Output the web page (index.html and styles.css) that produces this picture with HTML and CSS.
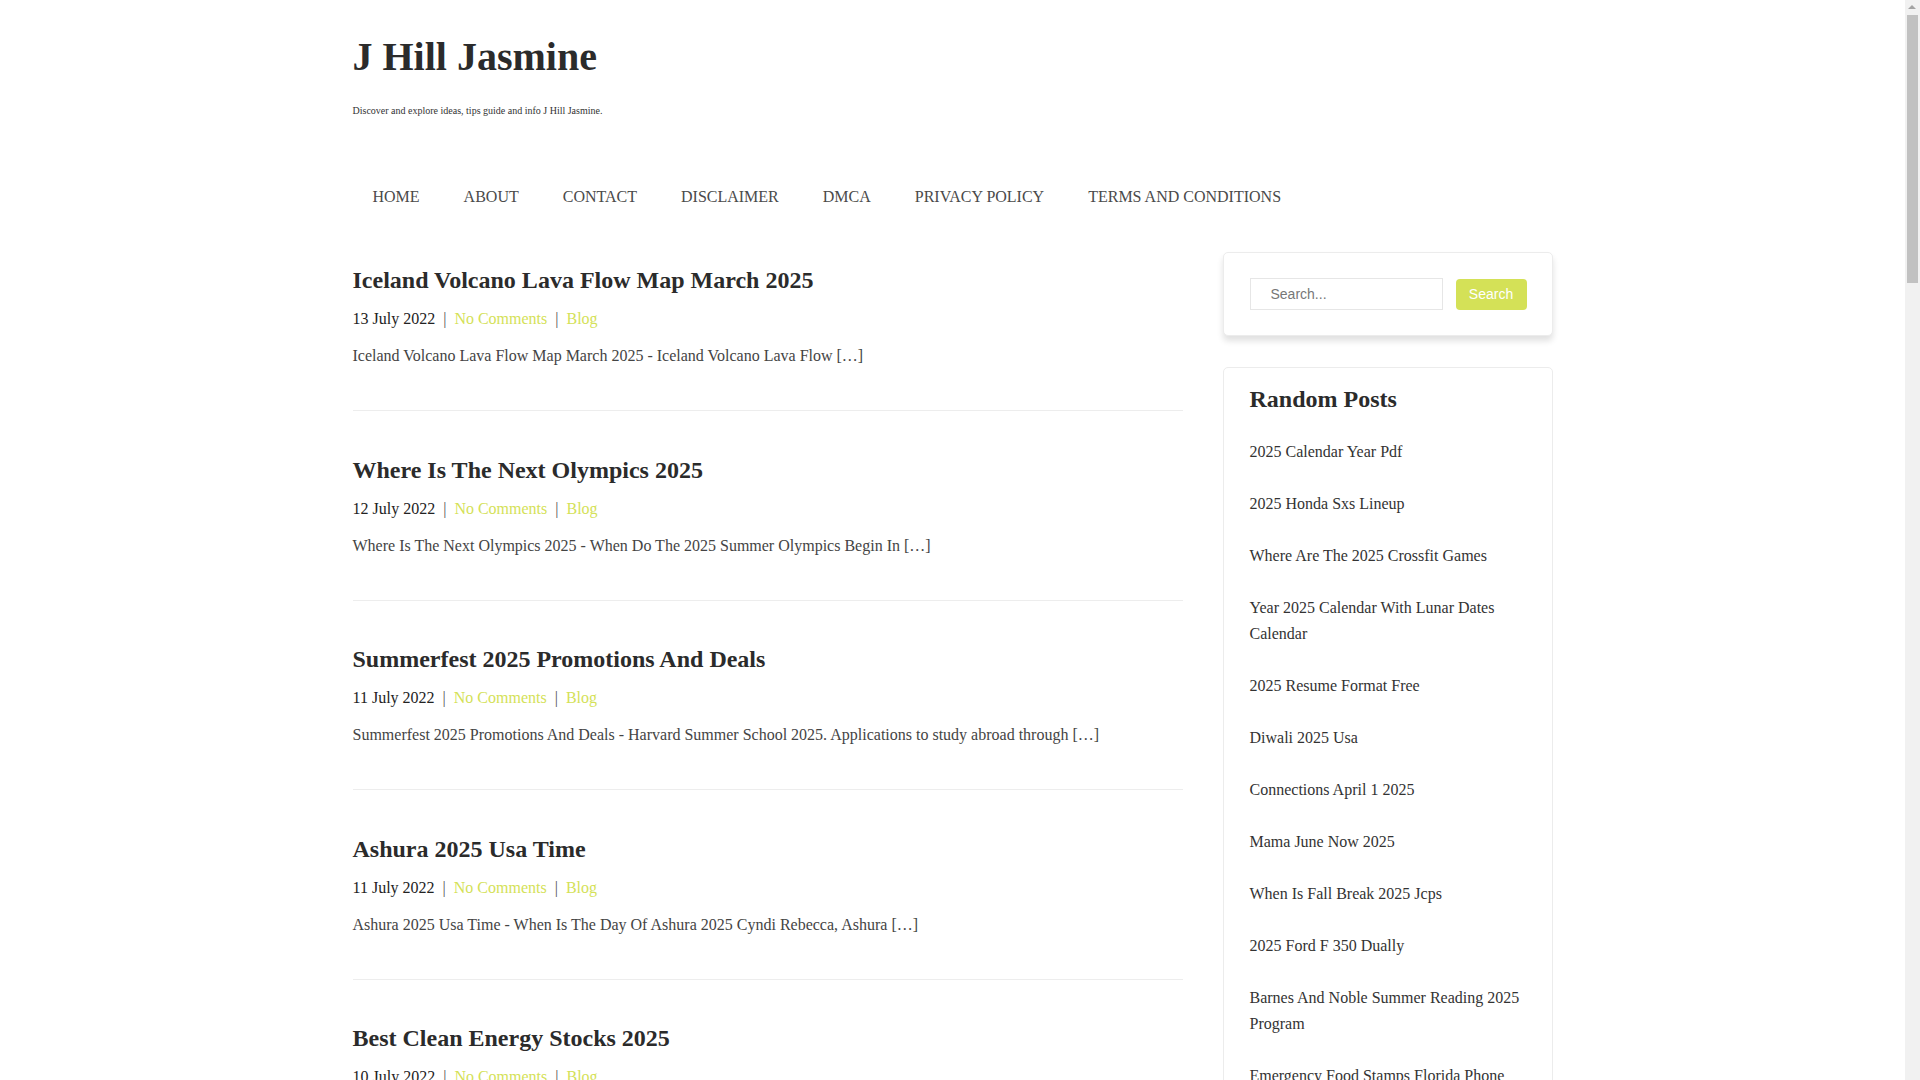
FILE: index.html
```html
<!DOCTYPE html>
<html lang="en">
<head>
<meta charset="utf-8">
<title>J Hill Jasmine</title>
<link rel="stylesheet" href="styles.css">
</head>
<body>
<div class="wrap">
  <header class="site-header">
    <h1 class="site-title">J Hill Jasmine</h1>
    <p class="tagline">Discover and explore ideas, tips guide and info J Hill Jasmine.</p>
    <nav class="menu">
      <a href="#">HOME</a>
      <a href="#">ABOUT</a>
      <a href="#">CONTACT</a>
      <a href="#">DISCLAIMER</a>
      <a href="#">DMCA</a>
      <a href="#">PRIVACY POLICY</a>
      <a href="#">TERMS AND CONDITIONS</a>
    </nav>
  </header>
  <div class="layout">
    <main class="posts">
      <article class="post">
        <h2 class="post-title">Iceland Volcano Lava Flow Map March 2025</h2>
        <div class="meta"><span>13 July 2022</span><span class="sep">|</span><a href="#">No Comments</a><span class="sep">|</span><a href="#">Blog</a></div>
        <p class="excerpt">Iceland Volcano Lava Flow Map March 2025 - Iceland Volcano Lava Flow […]</p>
      </article>
      <article class="post">
        <h2 class="post-title">Where Is The Next Olympics 2025</h2>
        <div class="meta"><span>12 July 2022</span><span class="sep">|</span><a href="#">No Comments</a><span class="sep">|</span><a href="#">Blog</a></div>
        <p class="excerpt">Where Is The Next Olympics 2025 - When Do The 2025 Summer Olympics Begin In […]</p>
      </article>
      <article class="post">
        <h2 class="post-title">Summerfest 2025 Promotions And Deals</h2>
        <div class="meta"><span>11 July 2022</span><span class="sep">|</span><a href="#">No Comments</a><span class="sep">|</span><a href="#">Blog</a></div>
        <p class="excerpt">Summerfest 2025 Promotions And Deals - Harvard Summer School 2025. Applications to study abroad through […]</p>
      </article>
      <article class="post">
        <h2 class="post-title">Ashura 2025 Usa Time</h2>
        <div class="meta"><span>11 July 2022</span><span class="sep">|</span><a href="#">No Comments</a><span class="sep">|</span><a href="#">Blog</a></div>
        <p class="excerpt">Ashura 2025 Usa Time - When Is The Day Of Ashura 2025 Cyndi Rebecca, Ashura […]</p>
      </article>
      <article class="post">
        <h2 class="post-title">Best Clean Energy Stocks 2025</h2>
        <div class="meta"><span>10 July 2022</span><span class="sep">|</span><a href="#">No Comments</a><span class="sep">|</span><a href="#">Blog</a></div>
        <p class="excerpt">Best Clean Energy Stocks 2025 - Best Clean Energy Stocks To Buy Now […]</p>
      </article>
      <article class="post">
        <h2 class="post-title">2025 Calendar Year Pdf</h2>
        <div class="meta"><span>10 July 2022</span><span class="sep">|</span><a href="#">No Comments</a><span class="sep">|</span><a href="#">Blog</a></div>
        <p class="excerpt">2025 Calendar Year Pdf - Free Printable 2025 Calendar Templates […]</p>
      </article>
      <article class="post">
        <h2 class="post-title">2025 Honda Sxs Lineup</h2>
        <div class="meta"><span>9 July 2022</span><span class="sep">|</span><a href="#">No Comments</a><span class="sep">|</span><a href="#">Blog</a></div>
        <p class="excerpt">2025 Honda Sxs Lineup - New Honda Side By Side Models For 2025 […]</p>
      </article>
      <article class="post">
        <h2 class="post-title">Diwali 2025 Usa</h2>
        <div class="meta"><span>9 July 2022</span><span class="sep">|</span><a href="#">No Comments</a><span class="sep">|</span><a href="#">Blog</a></div>
        <p class="excerpt">Diwali 2025 Usa - When Is Diwali In 2025 In The United States […]</p>
      </article>
      <article class="post">
        <h2 class="post-title">Mama June Now 2025</h2>
        <div class="meta"><span>8 July 2022</span><span class="sep">|</span><a href="#">No Comments</a><span class="sep">|</span><a href="#">Blog</a></div>
        <p class="excerpt">Mama June Now 2025 - Mama June Shannon Latest News And Updates […]</p>
      </article>
      <article class="post">
        <h2 class="post-title">2025 Ford F 350 Dually</h2>
        <div class="meta"><span>8 July 2022</span><span class="sep">|</span><a href="#">No Comments</a><span class="sep">|</span><a href="#">Blog</a></div>
        <p class="excerpt">2025 Ford F 350 Dually - Ford Super Duty F 350 Dually Specs And Price […]</p>
      </article>
    </main>
    <aside class="sidebar">
      <section class="widget search-widget">
        <form class="search-form">
          <input class="search-input" type="search" placeholder="Search...">
          <button class="search-btn" type="button">Search</button>
        </form>
      </section>
      <section class="widget random-widget">
        <h3 class="widget-title">Random Posts</h3>
        <ul class="random-list">
          <li><a href="#">2025 Calendar Year Pdf</a></li>
          <li><a href="#">2025 Honda Sxs Lineup</a></li>
          <li><a href="#">Where Are The 2025 Crossfit Games</a></li>
          <li><a href="#">Year 2025 Calendar With Lunar Dates Calendar</a></li>
          <li><a href="#">2025 Resume Format Free</a></li>
          <li><a href="#">Diwali 2025 Usa</a></li>
          <li><a href="#">Connections April 1 2025</a></li>
          <li><a href="#">Mama June Now 2025</a></li>
          <li><a href="#">When Is Fall Break 2025 Jcps</a></li>
          <li><a href="#">2025 Ford F 350 Dually</a></li>
          <li><a href="#">Barnes And Noble Summer Reading 2025 Program</a></li>
          <li><a href="#">Emergency Food Stamps Florida Phone Number</a></li>
          <li><a href="#">Best Clean Energy Stocks 2025</a></li>
          <li><a href="#">Ashura 2025 Usa Time</a></li>
        </ul>
      </section>
    </aside>
  </div>
  <footer class="site-footer">Copyright © 2025 J Hill Jasmine</footer>
</div>
<div class="fake-scrollbar" aria-hidden="true">
  <div class="sb-arrow"></div>
  <div class="sb-thumb"></div>
</div>
</body>
</html>
```

FILE: styles.css
```css
html, body {
  margin: 0;
  padding: 0;
  background: #fff;
}
body {
  font-family: "Liberation Serif", "Times New Roman", serif;
  color: #333;
  font-size: 16px;
  padding-right: 15px;
}
a {
  text-decoration: none;
}
.wrap {
  width: 1200px;
  margin: 0 auto;
}
.site-header {
  padding-top: 33px;
}
.site-title {
  margin: 0;
  font-size: 40px;
  line-height: 48px;
  font-weight: bold;
  color: #2b2b2b;
}
.tagline {
  margin: 22px 0 0;
  font-size: 10px;
  line-height: 15px;
  color: #333;
}
.menu {
  display: flex;
  gap: 4px;
  margin-top: 69px;
}
.menu a {
  padding: 0 20px;
  font-size: 16px;
  line-height: 20px;
  color: #4a4a4a;
}
.layout {
  display: grid;
  grid-template-columns: 830px 330px;
  column-gap: 40px;
  align-items: start;
  margin-top: 45px;
}
.post {
  border-bottom: 1px solid #ededed;
  padding: 14px 0 41px;
  margin-bottom: 30.5px;
}
.post-title {
  margin: 0;
  font-size: 24px;
  line-height: 29px;
  font-weight: bold;
  color: #2b2b2b;
}
.meta {
  margin-top: 11px;
  font-size: 16px;
  line-height: 26px;
  color: #222;
}
.meta a {
  color: #d4e157;
}
.sep {
  margin: 0 8px;
  color: #555;
}
.excerpt {
  margin: 11px 0 0;
  font-size: 16px;
  line-height: 26px;
  color: #444;
}
.sidebar {
  display: flex;
  flex-direction: column;
  gap: 31px;
}
.widget {
  border: 1px solid #ececec;
  border-radius: 5px;
  background: #fff;
}
.search-widget {
  padding: 25px 25px 25px 26px;
  box-shadow: 0 5px 6px rgba(0, 0, 0, 0.12);
}
.search-form {
  display: flex;
  gap: 13px;
  align-items: center;
}
.search-input {
  width: 193px;
  height: 32px;
  box-sizing: border-box;
  border: 1px solid #e6e6e6;
  padding: 0 20px;
  font-family: "Liberation Sans", Arial, sans-serif;
  font-size: 14px;
  color: #555;
  outline: none;
  border-radius: 0;
}
.search-input::placeholder {
  color: #777;
}
.search-btn {
  width: 71px;
  height: 31px;
  border: none;
  border-radius: 4px;
  background: #d4e157;
  color: #fff;
  font-family: "Liberation Sans", Arial, sans-serif;
  font-size: 14px;
  padding: 0;
}
.random-widget {
  padding: 17px 25px 20px 26px;
}
.widget-title {
  margin: 0;
  font-size: 24px;
  line-height: 29px;
  font-weight: bold;
  color: #2b2b2b;
}
.random-list {
  list-style: none;
  margin: 12px 0 0;
  padding: 0;
}
.random-list li {
  padding: 13px 0;
  font-size: 16px;
  line-height: 26px;
}
.random-list a {
  color: #333;
}
.site-footer {
  padding: 40px 0 60px;
  font-size: 14px;
  color: #777;
}
.fake-scrollbar {
  position: fixed;
  top: 0;
  right: 0;
  width: 15px;
  height: 100vh;
  background: #f1f1f1;
}
.sb-arrow {
  position: absolute;
  top: 5px;
  left: 3px;
  width: 0;
  height: 0;
  border-left: 4px solid transparent;
  border-right: 4px solid transparent;
  border-bottom: 4px solid #a3a3a3;
}
.sb-thumb {
  position: absolute;
  top: 15px;
  left: 2px;
  width: 11px;
  height: 268px;
  background: #c1c1c1;
}
```
